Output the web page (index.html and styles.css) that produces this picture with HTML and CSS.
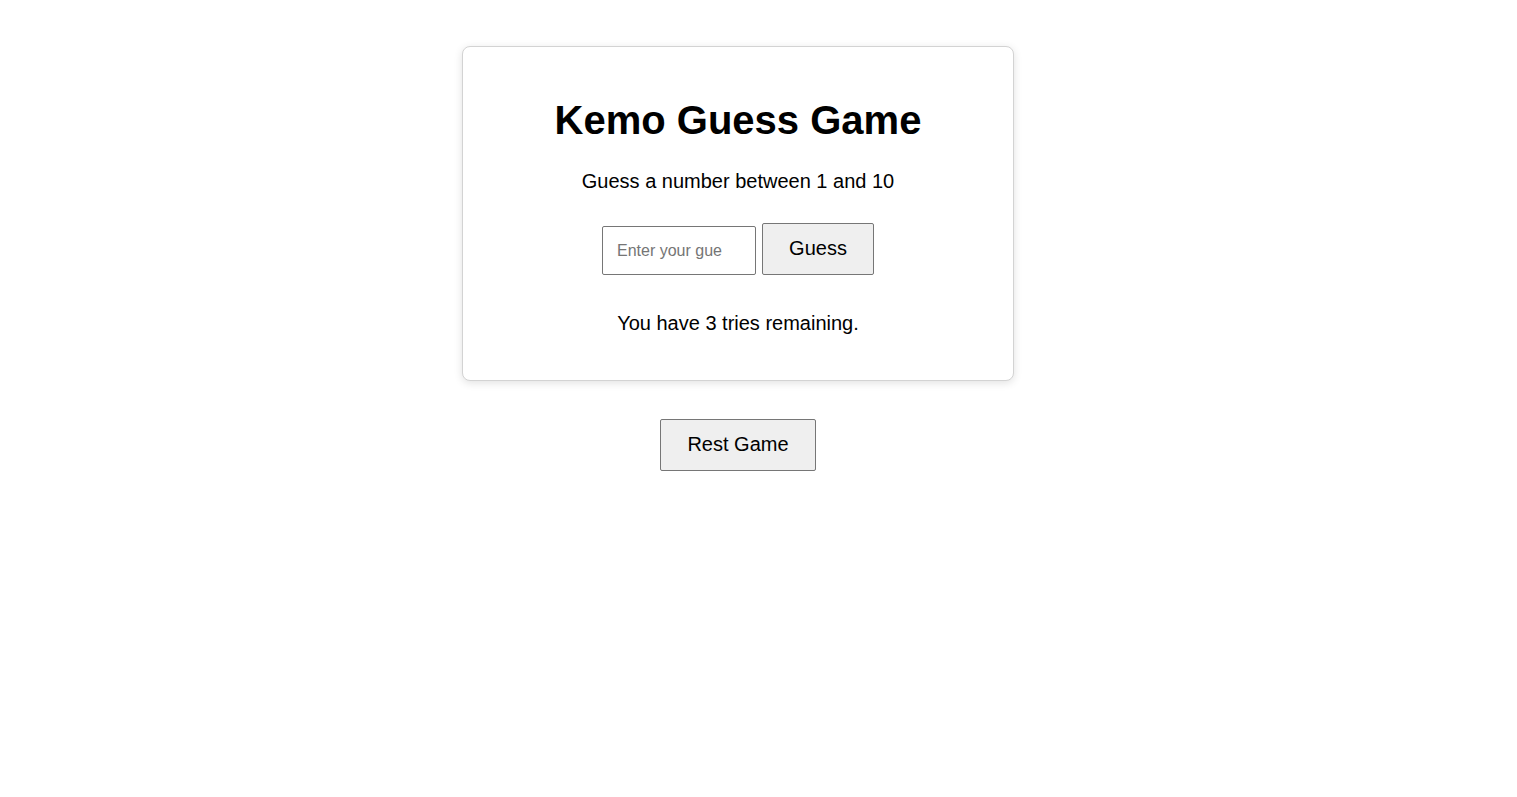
FILE: index.html
```html
<!DOCTYPE html>
<html lang="en">
<head>
<meta charset="utf-8">
<title>Kemo Guess Game</title>
<link rel="stylesheet" href="styles.css">
</head>
<body>
<main class="page">
  <section class="card">
    <h1 class="title">Kemo Guess Game</h1>
    <p class="subtitle">Guess a number between 1 and 10</p>
    <div class="guess-row">
      <input class="guess-input" type="text" placeholder="Enter your guess">
      <button class="btn btn-guess" type="button">Guess</button>
    </div>
    <p class="status">You have 3 tries remaining.</p>
  </section>
  <button class="btn btn-reset" type="button">Rest Game</button>
</main>
</body>
</html>
```

FILE: styles.css
```css
html, body {
  margin: 0;
  padding: 0;
  background: #ffffff;
}

body {
  font-family: "Liberation Sans", Arial, sans-serif;
  color: #000;
}

.page {
  display: flex;
  flex-direction: column;
  align-items: center;
  width: 1476px;
  padding-top: 46px;
}

.card {
  box-sizing: border-box;
  width: 552px;
  height: 335px;
  border: 1px solid #d3d3d3;
  border-radius: 8px;
  box-shadow: 0 2px 8px rgba(0, 0, 0, 0.12);
  background: #fff;
  display: flex;
  flex-direction: column;
  align-items: center;
  padding-top: 50px;
}

.title {
  margin: 0;
  font-size: 40px;
  font-weight: 700;
  line-height: 46px;
}

.subtitle {
  margin: 27px 0 0;
  font-size: 20px;
  line-height: 23px;
}

.guess-row {
  display: flex;
  align-items: flex-end;
  gap: 6px;
  margin-top: 30px;
}

.guess-input {
  box-sizing: border-box;
  width: 154px;
  height: 49px;
  border: 1px solid #767676;
  border-radius: 2px;
  padding: 0 33px 0 14px;
  font-family: "Liberation Sans", Arial, sans-serif;
  font-size: 16px;
  color: #000;
  outline: none;
}

.guess-input::placeholder {
  color: #757575;
}

.btn {
  box-sizing: border-box;
  height: 52px;
  border: 1px solid #767676;
  border-radius: 2px;
  background: #efefef;
  font-family: "Liberation Sans", Arial, sans-serif;
  font-size: 20px;
  color: #000;
  padding: 0;
  cursor: pointer;
}

.btn-guess {
  width: 112px;
  padding-bottom: 2px;
}

.status {
  margin: 37px 0 0;
  font-size: 20px;
  line-height: 23px;
}

.btn-reset {
  width: 156px;
  margin-top: 38px;
  padding-bottom: 1px;
}
```
